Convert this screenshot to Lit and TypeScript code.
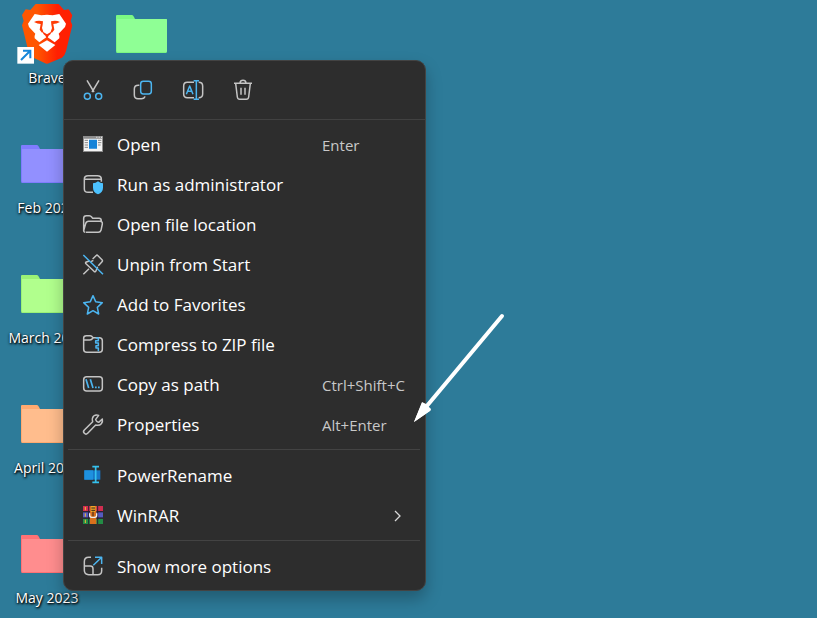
import { LitElement, html, svg, css, nothing, SVGTemplateResult } from "lit";
import { customElement, property } from "lit/decorators.js";

// All menu glyphs share a 60-unit square drawn at 20px.
const glyphs: Record<string, SVGTemplateResult> = {
  cut: svg`<path class="g" d="M12 1 33 36M48 1 27 36"/><circle class="b" cx="13" cy="49" r="9"/><circle class="b" cx="47" cy="49" r="9"/>`,
  copy: svg`<path class="g" d="M19 16h-3q-12 0-12 11v18q0 11 11 11h10q9 0 11-7"/><rect class="b" x="23" y="4" width="32" height="38" rx="8"/>`,
  rename: svg`<path class="g" d="M33 7H13Q2 7 2 18v24q0 11 11 11h20M47 7q12 0 12 11v24q0 11-12 11"/><path class="b" d="M10 43 20 18 30 43M14 34h13"/><path class="b" d="M32 2h16M32 58h16M40 2v56"/>`,
  trash: svg`<path class="g" d="M3 10h54M8 10l5 41q1 7 7 7h20q6 0 7-7l5-41M21 9q1-8 9-8t9 8M24 23v21M36 23v21"/>`,
  open: svg`<path fill="#8d8d8d" d="M0 3h60v48H0z"/><path fill="#f4f4f4" d="M3 11h54v37H3z"/><path fill="#fff" d="M40 5h3v3h-3zM47 5h3v3h-3zM54 5h3v3h-3z"/><path fill="#1683d8" d="M18 14h24v27H18z"/><path stroke="#858585" stroke-width="3" d="M5 16h10M5 23h10M5 30h10M5 37h10M45 16h10M45 23h10M45 30h8"/>`,
  admin: svg`<path class="g" d="M30 52H15Q4 52 4 42V12Q4 2 15 2h28q12 0 12 10v8M4 13h51"/><path fill="#4cc2ff" d="M45 19q7 6 15 6v13q0 14-15 20-15-6-15-20V25q8 0 15-6z"/>`,
  folder: svg`<path class="g" d="M2 49V10q0-8 8-8h9q4 0 7 4l3 4h19q7 0 7 8M6 52q-5-1-3-8l5-18q2-7 9-7h34q8 0 7 8l-4 19q-2 6-8 6H8"/>`,
  unpin: svg`<path class="g" d="M1 58 18 41M29 12 39 2q3-3 6 0l12 12q3 3 0 6L46 32M31 16l-7 4M44 35l-5 12q-2 5-6 2L9 26q-3-3 1-5l9-3"/><path class="b" d="m1 0 59 58"/>`,
  star: svg`<path class="b" d="m30 2 8 18 20 3-15 14 4 20-17-10-17 10 4-20L2 23l20-3z"/>`,
  zip: svg`<path class="g" d="M2 15V9q0-7 8-7h12q4 0 8 6h19q9 0 9 9v26q0 9-9 9H11q-9 0-9-9V15h18q6 0 10-6"/><path class="b" d="M38 9h8v8h-8v7h8v8h-7v7h7v10"/>`,
  path: svg`<rect class="g" x="2" y="5" width="56" height="43" rx="9"/><path stroke="#4cb5f0" stroke-width="5" d="m9 13 8 26M22 13l8 26M36 37h5M45 37h5"/>`,
  wrench: svg`<path class="g" d="M47 1q-8-3-15 2-6 6-3 17L4 45q-5 5 0 10 5 5 10 0l24-25q11 3 17-4 5-6 3-14L47 22q-4-1-6-3t-3-6z"/>`,
  power: svg`<path fill="#1777c8" d="M4 13h48v28H4z"/><path fill="#1e91df" d="M4 13h26v28H4z"/><path stroke="#35c1ee" stroke-width="5" d="M28 2h20M28 49h20M38 2v47"/>`,
  winrar: svg`<path fill="#d12e50" d="M0 0h60v16H0z"/><path fill="#555bc0" d="M0 19h60v16H0z"/><path fill="#238c45" d="M0 38h60v16H0z"/><path stroke="#281f35" stroke-width="3" d="M0 17h60M0 36h60M17 0v54M44 0v54"/><path stroke="#f0bd35" stroke-width="3" d="M7 3v10M7 22v10M7 41v10"/><path fill="#d9701c" d="M21 0h19v54H21z"/><path fill="#efa82b" d="M24 0h13v18H24z"/><path fill="none" stroke="#eee" stroke-width="4" d="M20 22v6q0 6 6 6h9q6 0 6-6v-6"/><path stroke="#33251a" stroke-width="3" d="M25 6h11M25 13h11M30 17v14"/>`,
  more: svg`<path class="g" d="M24 1h-7Q4 1 4 14v26q0 13 13 13h27q12 0 12-12v-9M4 27h18q8 0 8 8v18"/><path class="b" d="M36 1h20v20M56 1 31 25"/>`,
};

const icon = (name: string) =>
  html`<svg class="glyph" viewBox="0 0 60 60" aria-hidden="true">${glyphs[name]}</svg>`;

interface Entry {
  icon: string;
  label: string;
  keys?: string;
  submenu?: boolean;
}

const groups: Entry[][] = [
  [
    { icon: "open", label: "Open", keys: "Enter" },
    { icon: "admin", label: "Run as administrator" },
    { icon: "folder", label: "Open file location" },
    { icon: "unpin", label: "Unpin from Start" },
    { icon: "star", label: "Add to Favorites" },
    { icon: "zip", label: "Compress to ZIP file" },
    { icon: "path", label: "Copy as path", keys: "Ctrl+Shift+C" },
    { icon: "wrench", label: "Properties", keys: "Alt+Enter" },
  ],
  [
    { icon: "power", label: "PowerRename" },
    { icon: "winrar", label: "WinRAR", submenu: true },
  ],
  [{ icon: "more", label: "Show more options" }],
];

@customElement("context-menu")
export class ContextMenu extends LitElement {
  static styles = css`
    :host {
      display: block;
      box-sizing: border-box;
      background: #2d2d2d;
      border: 1px solid #434343;
      border-radius: 10px;
      box-shadow: 0 8px 16px rgba(0, 0, 0, 0.26);
      overflow: hidden;
      padding-bottom: 3px;
    }
    button {
      appearance: none;
      border: 0;
      margin: 0;
      padding: 0;
      background: none;
      color: #fff;
      font: inherit;
      text-align: left;
    }
    button:hover {
      background: #383838;
    }
    .tools {
      display: flex;
      padding: 0 4px;
      height: 58px;
      border-bottom: 1px solid #414141;
      margin-bottom: 5px;
    }
    .tool {
      display: grid;
      place-items: center;
      width: 50px;
    }
    .item {
      display: grid;
      grid-template-columns: 20px 1fr 84px;
      column-gap: 14px;
      align-items: center;
      width: 100%;
      height: 40px;
      padding: 0 19px;
      white-space: nowrap;
    }
    .label {
      font-size: 17px;
      line-height: 24px;
    }
    .keys {
      font-size: 15px;
      line-height: 24px;
      color: #c8c8c8;
    }
    .chevron {
      justify-self: end;
      width: 8px;
      height: 12px;
      margin-right: 4px;
      fill: none;
      stroke: #d8d8d8;
      stroke-width: 1.3;
    }
    .rule {
      border: 0;
      height: 1px;
      margin: 4px 5px 6px 4px;
      background: #434343;
    }
    .glyph {
      display: block;
      width: 20px;
      height: 20px;
      overflow: visible;
    }
    .g,
    .b {
      fill: none;
      stroke: #c4c4c4;
      stroke-width: 4.5;
      stroke-linejoin: round;
    }
    .b {
      stroke: #4cb5f0;
    }
  `;

  render() {
    const tools = [
      ["cut", "Cut"],
      ["copy", "Copy"],
      ["rename", "Rename"],
      ["trash", "Delete"],
    ];
    return html`
      <div class="tools">
        ${tools.map(([name, label]) => html`<button class="tool" aria-label=${label}>${icon(name)}</button>`)}
      </div>
      ${groups.map(
        (group, i) => html`
          ${i ? html`<hr class="rule" />` : nothing}
          ${group.map(
            (e) => html`<button class="item">
              ${icon(e.icon)}
              <span class="label">${e.label}</span>
              ${e.keys ? html`<span class="keys">${e.keys}</span>` : nothing}
              ${e.submenu
                ? html`<svg class="chevron" viewBox="0 0 8 12" aria-hidden="true"><path d="m1 1 5 5-5 5" /></svg>`
                : nothing}
            </button>`
          )}
        `
      )}
    `;
  }
}

@customElement("desktop-icon")
export class DesktopIcon extends LitElement {
  @property() label = "";
  @property() color = "";
  @property() tab = "";

  static styles = css`
    :host {
      display: flex;
      flex-direction: column;
      align-items: center;
      gap: 2px;
    }
    .art {
      display: grid;
      place-items: center;
      height: 64px;
    }
    .folder {
      width: 52px;
      height: 40px;
    }
    .brave {
      width: 60px;
      height: 64px;
    }
    .label {
      font-size: 14px;
      line-height: 20px;
      color: #fff;
      white-space: nowrap;
      text-shadow: 1px 1px 2px #000, 0 1px 3px #000;
    }
  `;

  render() {
    return html`
      <div class="art">${this.color ? this.folder() : this.brave()}</div>
      ${this.label ? html`<span class="label">${this.label}</span>` : nothing}
    `;
  }

  private folder() {
    return html`<svg class="folder" viewBox="0 0 52 40" aria-hidden="true">
      <path fill=${this.tab} d="M0 37V2q0-1 1-1h15q1 0 2 2l1 2h31q1 0 1 1v31q0 2-1 2H1q-1 0-1-2z" />
      <path fill=${this.color} d="M1 5h49q1 0 1 1v31q0 1-1 1H2q-1 0-1-1z" />
    </svg>`;
  }

  private brave() {
    const brow = svg`<path fill="#ff3c05" d="M102 66q12-6 27-2l-1 10-2 10 4 11-4 3-7-9 3-17q-9 0-20-6z" />`;
    return html`<svg class="brave" viewBox="51 6 180 192" aria-hidden="true">
      <defs>
        <linearGradient id="flame"><stop offset="0.3" stop-color="#ff5601" /><stop offset="0.7" stop-color="#ff2002" /></linearGradient>
      </defs>
      <path fill="url(#flame)" d="m107 12h69l16 18 14-2 11 18-5 17 5 13-19 78q-3 12-12 19l-38 16q-7 5-14 0l-37-17q-9-7-12-19L66 76l5-13-5-18 11-17 14 2z" />
      <path fill="#fff" d="m104 42 20 4q17-4 34 0l20-4 20 29-3 10-19 20q4 8 2 14l-14 12q-12-10-23-16-11 6-23 16l-14-12q-2-6 2-14L87 81l-3-10z" />
      ${brow}
      <g transform="translate(282 0) scale(-1 1)">${brow}</g>
      <path fill="#ff3005" d="m126 94 15 9 15-9-5 9-6 5-1 5h-6l-1-5-6-5z" />
      <path fill="#fff" d="m141 121 25 14-25 20-25-20z" />
      <path fill="#fff" d="M52 141h50v50H52z" />
      <path fill="none" stroke="#1686d9" stroke-width="6" d="m63 180 27-27M69 152h22v23" />
    </svg>`;
  }
}

const shortcuts = [
  { label: "Brave", color: "", tab: "" },
  { label: "Feb 2023", color: "#9290ff", tab: "#807cff" },
  { label: "March 2023", color: "#b1ff8d", tab: "#9bf276" },
  { label: "April 2023", color: "#ffbd8d", tab: "#ffaa70" },
  { label: "May 2023", color: "#ff8d8e", tab: "#ff7275" },
  { label: "", color: "#8fff95", tab: "#7cf983" },
];

@customElement("app-root")
export class AppRoot extends LitElement {
  static styles = css`
    :host {
      display: block;
      position: relative;
      min-height: 100vh;
      overflow: hidden;
      background: #2d7b99;
      font-family: "Open Sans", "Noto Sans", sans-serif;
    }
    .icons {
      display: grid;
      grid-auto-flow: column;
      grid-template-rows: repeat(4, 130px) 96px;
      grid-auto-columns: 94px;
      column-gap: 1px;
      padding-top: 2px;
    }
    /* The menu and the pointer float over the desktop. */
    .menu {
      position: absolute;
      left: 63px;
      top: 60px;
      width: 363px;
    }
    .pointer {
      position: absolute;
      left: 410px;
      top: 310px;
      width: 100px;
      height: 116px;
      pointer-events: none;
    }
  `;

  render() {
    return html`
      <div class="icons">
        ${shortcuts.map(
          (s) => html`<desktop-icon .label=${s.label} .color=${s.color} .tab=${s.tab}></desktop-icon>`
        )}
      </div>
      <context-menu class="menu"></context-menu>
      <svg class="pointer" viewBox="0 0 100 116" aria-hidden="true">
        <path stroke="#fff" stroke-width="4" stroke-linecap="round" d="M92 6 16 97" />
        <path fill="#fff" d="M4 112 12 92l4 2 5 5 0 0-1 2z" />
        <path fill="#fff" d="m4 112 8-19 3 1 6 6v0z" />
      </svg>
    `;
  }
}
